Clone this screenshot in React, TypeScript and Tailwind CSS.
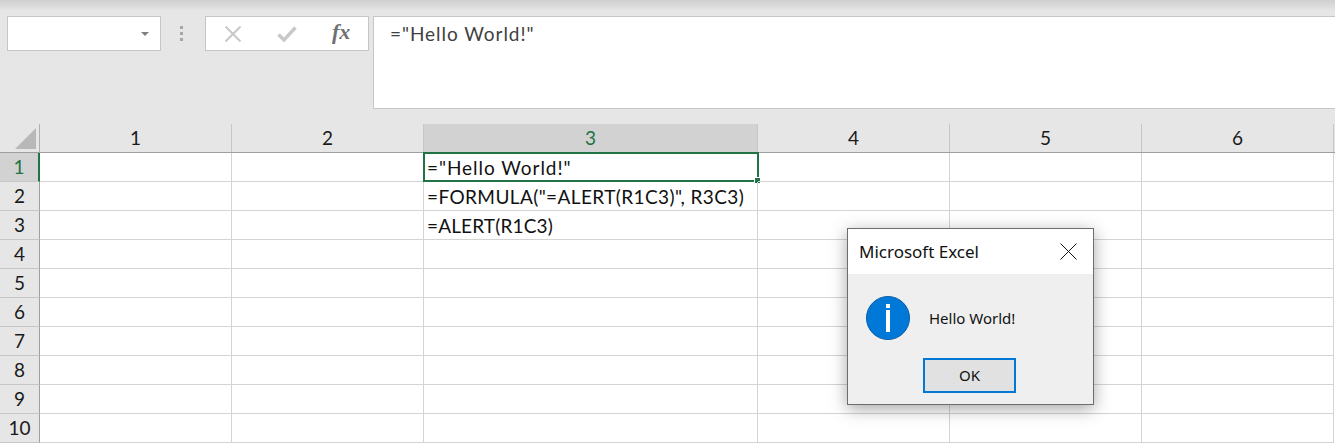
const colWidths = ["w-[192px]", "w-[192px]", "w-[334px]", "w-[192px]", "w-[192px]", "w-[192px]"];
const cells: Record<string, { text: string; track: string }> = {
  "1-3": { text: '="Hello World!"', track: "tracking-[0.95px]" },
  "2-3": { text: '=FORMULA("=ALERT(R1C3)", R3C3)', track: "tracking-[0.4px]" },
  "3-3": { text: "=ALERT(R1C3)", track: "tracking-[0.15px]" },
};
const rows = [1, 2, 3, 4, 5, 6, 7, 8, 9, 10];

function FormulaBar() {
  return (
    <div className="h-[124px] bg-[#e6e6e6] bg-gradient-to-b from-[#cfcfcf] from-0% to-[#e6e6e6] to-[9%] flex items-start pt-[16px] pl-[7px]">
      <div className="w-[154px] h-[35px] bg-white border border-[#c6c6c6] flex items-center justify-end pr-[11px]">
        <div className="w-0 h-0 border-x-[4px] border-x-transparent border-t-[4px] border-t-[#808080]" />
      </div>
      <div className="w-[41px] h-[35px] flex flex-col items-center justify-center gap-[3px]">
        <span className="w-[3px] h-[3px] bg-[#a6a6a6]" />
        <span className="w-[3px] h-[3px] bg-[#a6a6a6]" />
        <span className="w-[3px] h-[3px] bg-[#a6a6a6]" />
      </div>
      <div className="ml-[3px] w-[164px] h-[35px] bg-white border border-[#c6c6c6] flex items-center">
        <svg width="18" height="16" viewBox="0 0 18 16" className="ml-[18px]">
          <path d="M1.5 0.5 L16.5 15.5 M16.5 0.5 L1.5 15.5" stroke="#c8c8c8" strokeWidth="2" fill="none" />
        </svg>
        <svg width="20" height="16" viewBox="0 0 20 16" className="ml-[35px]">
          <path d="M1.5 8.5 L7 14 L18.5 1.5" stroke="#c8c8c8" strokeWidth="3.4" fill="none" />
        </svg>
        <span className="ml-[35px] text-[22px] leading-none italic font-bold text-[#707070] font-['Liberation_Serif',serif] -mt-[3px]">
          fx
        </span>
      </div>
      <div className="ml-[4px] flex-1 h-[93px] bg-white border-l border-b border-t border-[#c6c6c6] pl-[16px] pt-[5px] text-[19px] tracking-[0.95px] leading-[24px] text-[#404040] font-['Lato',sans-serif]">
        ="Hello World!"
      </div>
    </div>
  );
}

function Sheet() {
  return (
    <div className="font-['Lato',sans-serif] text-[19px] text-[#1a1a1a]">
      <div className="flex h-[29px] bg-[#e6e6e6] border-b border-[#9f9f9f]">
        <div className="w-[40px] border-r border-[#b0b0b0] flex items-end justify-end pr-[3px] pb-[3px]">
          <div className="w-0 h-0 border-l-[21px] border-l-transparent border-b-[21px] border-b-[#b8b8b8]" />
        </div>
        {colWidths.map((w, i) => (
          <div
            key={i}
            className={`${w} flex items-center justify-center border-r border-[#c6c6c6] ${
              i === 2 ? "bg-[#d2d2d2] text-[#217346]" : ""
            }`}
          >
            {i + 1}
          </div>
        ))}
      </div>
      {rows.map((r) => (
        <div key={r} className="flex h-[29px]">
          <div
            className={`w-[40px] flex items-center justify-center border-b border-b-[#c6c6c6] ${
              r === 1 ? "bg-[#d2d2d2] text-[#217346] border-r-2 border-r-[#217346]" : "bg-[#e6e6e6] border-r border-r-[#9f9f9f]"
            }`}
          >
            {r}
          </div>
          {colWidths.map((w, c) => {
            const cell = cells[`${r}-${c + 1}`];
            return (
              <div
                key={c}
                className={`${w} relative border-r border-b border-[#d4d4d4] pl-[3px] leading-[29px] whitespace-nowrap text-[#111] ${cell ? cell.track : ""}`}
              >
                {cell?.text}
                {r === 1 && c === 2 && (
                  <div className="absolute -left-[1px] -top-[1px] w-[336px] h-[30px] border-2 border-[#217346]">
                    <span className="absolute -right-[4px] -bottom-[4px] w-[7px] h-[7px] bg-[#217346] border border-white" />
                  </div>
                )}
              </div>
            );
          })}
        </div>
      ))}
    </div>
  );
}

function AlertDialog() {
  return (
    <div className="absolute left-[847px] top-[228px] w-[247px] h-[177px] border border-[#6d6d6d] bg-[#efefef] shadow-[0_4px_16px_rgba(0,0,0,0.35)] font-['Noto_Sans',sans-serif] text-[#111]">
      <div className="h-[45px] bg-white flex items-center justify-between pl-[11px] pr-[16px]">
        <span className="text-[17px]">Microsoft Excel</span>
        <svg width="17" height="17" viewBox="0 0 17 17">
          <path d="M0.5 0.5 L16.5 16.5 M16.5 0.5 L0.5 16.5" stroke="#111" strokeWidth="1" fill="none" />
        </svg>
      </div>
      <div className="flex items-center pl-[18px] pt-[22px]">
        <div className="w-[44px] h-[44px] rounded-full bg-[#0078d7] border border-[#0a5ea8] flex flex-col items-center justify-center gap-[2px]">
          <span className="w-[4px] h-[4px] bg-white" />
          <span className="w-[4px] h-[22px] bg-white" />
        </div>
        <span className="ml-[19px] text-[15px]">Hello World!</span>
      </div>
      <div className="flex justify-center pt-[18px] pr-[2px]">
        <div className="w-[93px] h-[35px] border-2 border-[#0078d7] bg-[#e1e1e1] flex items-center justify-center text-[15px]">
          OK
        </div>
      </div>
    </div>
  );
}

export default function App() {
  return (
    <div className="relative w-[1335px] h-[445px] overflow-hidden bg-white">
      <FormulaBar />
      <Sheet />
      <AlertDialog />
    </div>
  );
}
